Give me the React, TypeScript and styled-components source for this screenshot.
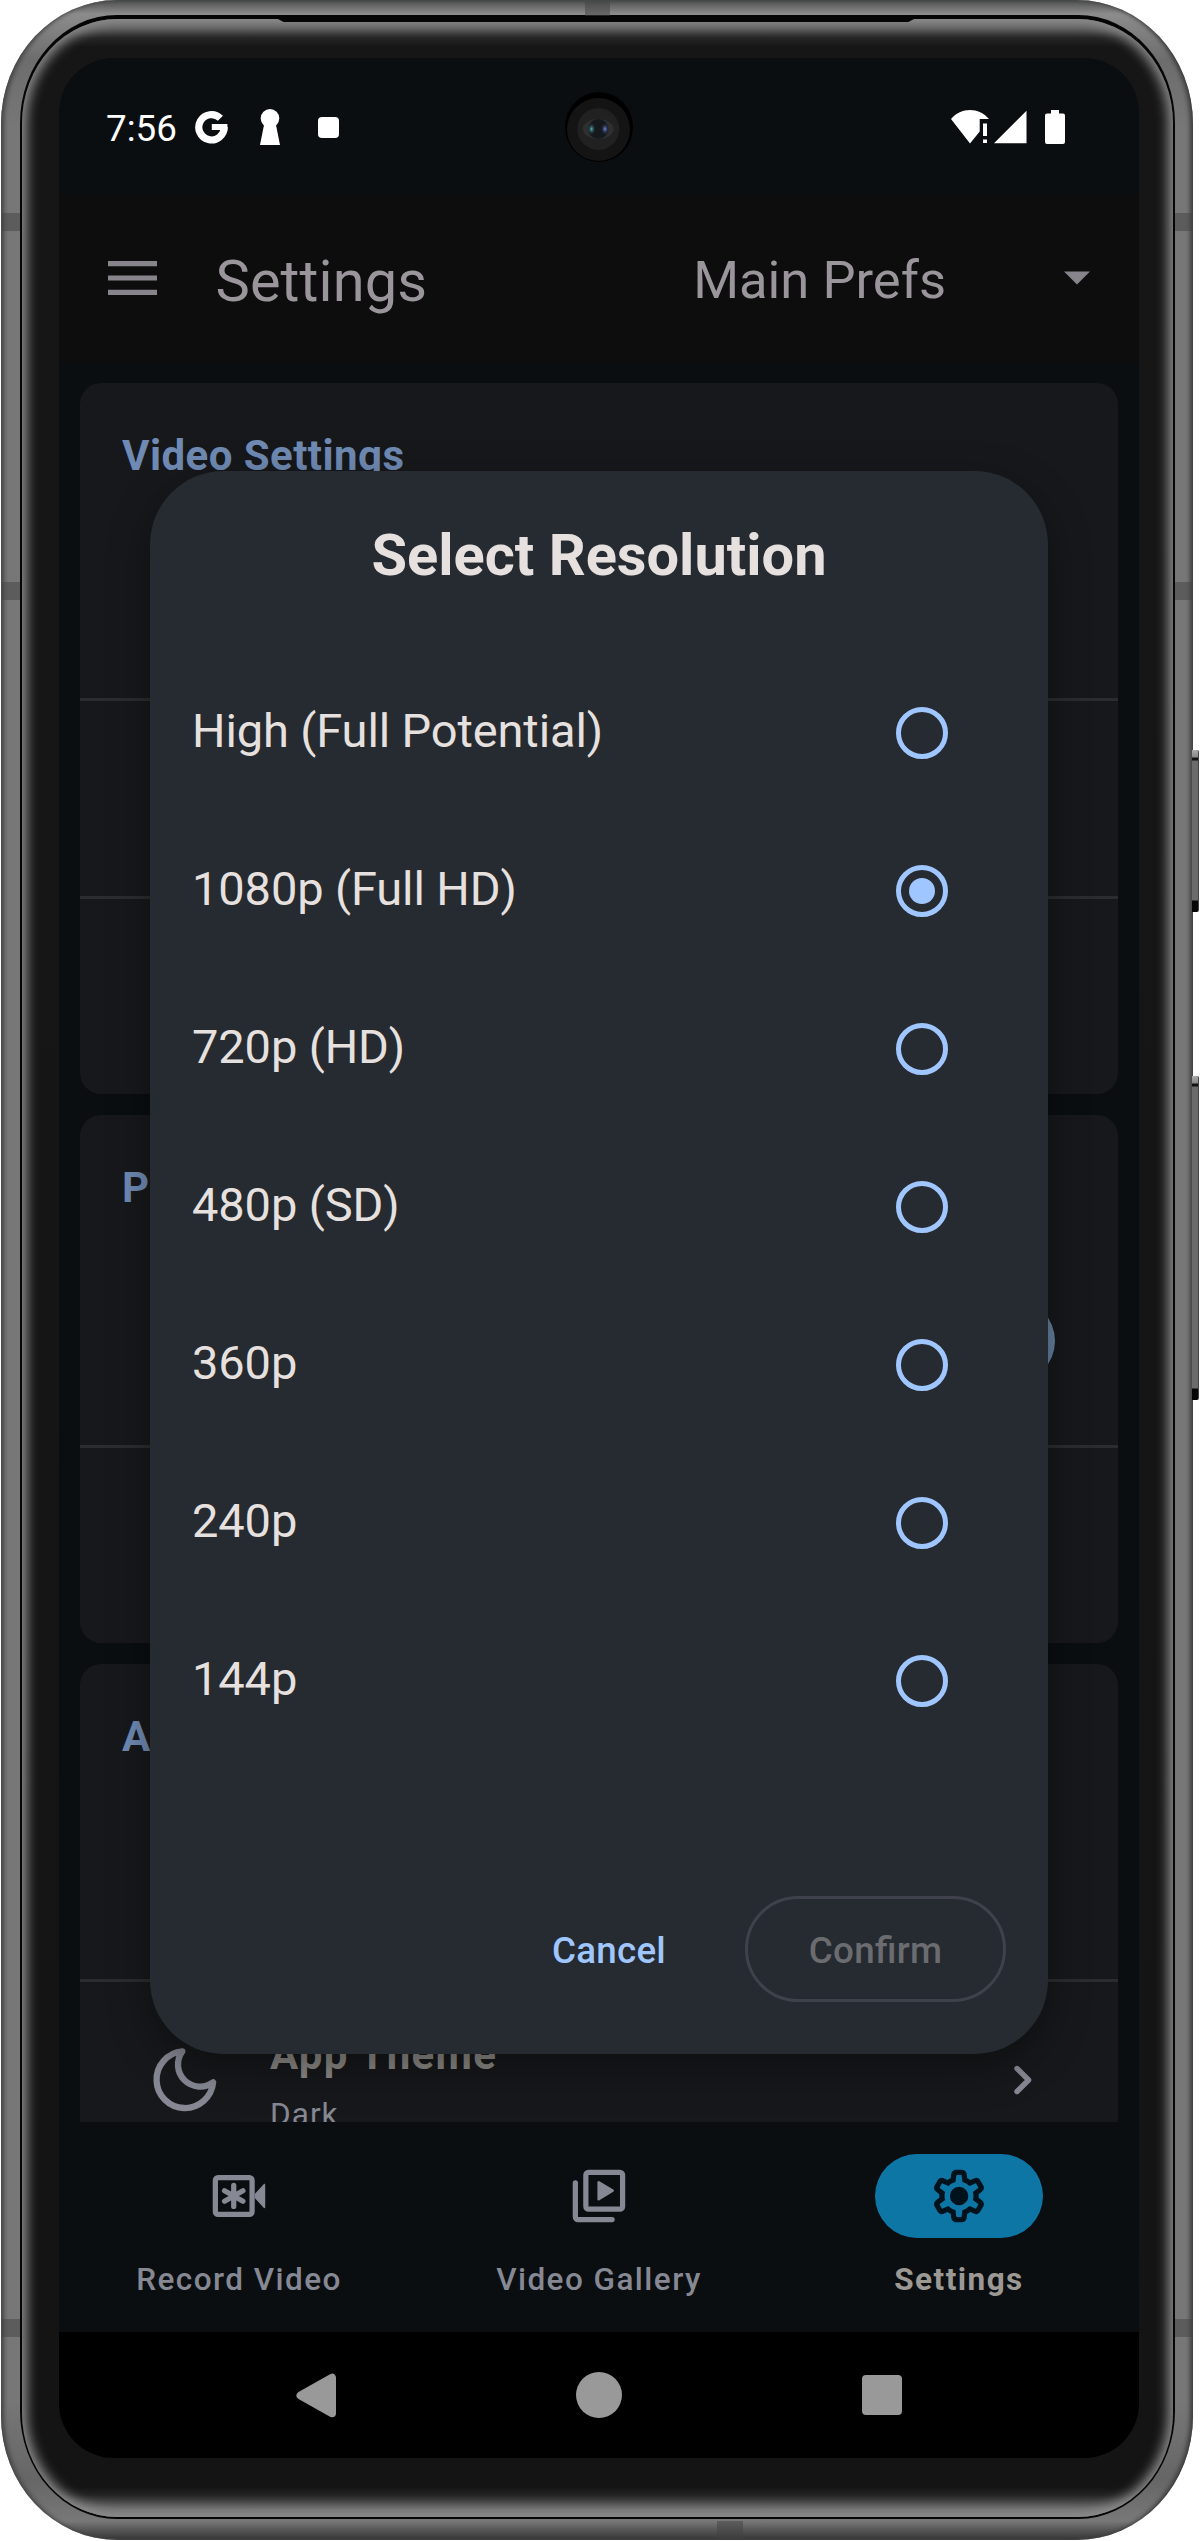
import React from "react";
import styled, { createGlobalStyle } from "styled-components";

const accent = "#a0c6ff";
const muted = "#868893";

const GlobalStyle = createGlobalStyle`
  * { box-sizing: border-box; }
  body { margin: 0; background: #fff; font-family: Roboto, "Noto Sans", sans-serif; }
  svg { display: block; flex: none; }
`;

const Stage = styled.main`
  position: relative;
  width: 1200px;
  height: 2541px;
  padding: 0 0 1px 1px;
  overflow: hidden;
`;

/* ---------- phone body ---------- */

const MetalBand = styled.div`
  width: 1192px;
  height: 2540px;
  padding: 15px 18px 21px 19px;
  border-radius: 116px / 124px;
  background: linear-gradient(
    180deg,
    #4b4f4d 0,
    #646464 5px,
    #8c8c8c 14px,
    #6d6d6d 60px,
    #777 130px,
    #777 2400px,
    #666 2480px,
    #787878 2521px,
    #565656 2530px,
    #3c3c3c 2538px
  );
  box-shadow: inset 4px 0 4px -1px #454545, inset -4px 0 4px -1px #3c3c3c;
`;

const Seam = styled.div`
  height: 100%;
  padding: 4px 2px 2px 2px;
  border-radius: 97px / 108px;
  background: #050505;
`;

const Glass = styled.div`
  height: 100%;
  padding: 39px 34px 60px 37px;
  border-radius: 95px / 104px;
  background: linear-gradient(
    180deg,
    #747474 0,
    #555 10px,
    #252525 19px,
    #161616 28px,
    #141414 2468px,
    #232323 2476px,
    #6a6a6a 2490px,
    #7d7d7d 2499px
  );
  box-shadow: inset 0 0 12px 5px #8c8c8c;
`;

const Speaker = styled.div`
  position: absolute;
  top: 17px;
  left: 274px;
  width: 644px;
  height: 5px;
  background: #060606;
  clip-path: polygon(0 0, 100% 0, 98.5% 100%, 1.5% 100%);
`;

const AntennaGap = styled.div<{ $x: number; $y: number; $w: number; $h: number }>`
  position: absolute;
  left: ${(p) => p.$x}px;
  top: ${(p) => p.$y}px;
  width: ${(p) => p.$w}px;
  height: ${(p) => p.$h}px;
  background: rgba(66, 66, 66, 0.5);
`;

const SideKey = styled.div<{ $top: number; $height: number }>`
  position: absolute;
  left: 1192px;
  top: ${(p) => p.$top}px;
  width: 7px;
  height: ${(p) => p.$height}px;
  border-radius: 0 2px 2px 0;
  border-right: 1px solid #444;
  background: linear-gradient(
    180deg,
    #aaa 0,
    #888 7px,
    #111 8px,
    #111 10px,
    #6b6b6b 11px,
    #6b6b6b calc(100% - 12px),
    #060606 calc(100% - 11px)
  );
`;

/* ---------- screen ---------- */

const Screen = styled.div`
  position: relative;
  display: flex;
  flex-direction: column;
  width: 1080px;
  height: 2400px;
  border-radius: 55px;
  overflow: hidden;
  background: #0a0e11;
`;

const StatusBar = styled.header`
  display: flex;
  align-items: center;
  justify-content: space-between;
  height: 136px;
  padding: 2px 74px 0 47px;
`;

const StatusGroup = styled.div`
  display: flex;
  align-items: center;
`;

const Clock = styled.time`
  width: 89px;
  padding-top: 4px;
  font-size: 36.75px;
  line-height: 44px;
  color: #fff;
`;

const Slot = styled.span<{ $gap: number }>`
  margin-left: ${(p) => p.$gap}px;
`;

const Camera = styled.div`
  position: absolute;
  top: 34px;
  left: 506px;
`;

const AppBar = styled.div`
  display: flex;
  align-items: center;
  height: 168px;
  padding: 0 49px 0 48.5px;
  background: #0d0d0d;
  color: #9a959b;
`;

const AppTitle = styled.h1`
  margin: 0 auto 0 59px;
  padding-top: 6px;
  font-size: 57.75px;
  font-weight: 400;
  line-height: 68px;
  letter-spacing: 0.1px;
`;

const Picker = styled.div`
  display: flex;
  align-items: center;
  gap: 118px;
  font-size: 52.5px;
  line-height: 62px;
`;

const PickerLabel = styled.span`
  padding-top: 4px;
`;

const Content = styled.section`
  display: flex;
  flex-direction: column;
  gap: 21px;
  height: 1760px;
  padding: 21px 21px 0;
  overflow: hidden;
`;

const Card = styled.article`
  flex: none;
  border-radius: 21px;
  background: #17181b;
  overflow: hidden;
`;

const CardTitle = styled.h2`
  height: 145px;
  margin: 0;
  padding: 48px 42px 0;
  font-size: 42px;
  font-weight: 700;
  line-height: 49px;
  letter-spacing: 0.45px;
  color: #6f8ab3;
`;

const Row = styled.div<{ $height: number; $divided?: boolean }>`
  display: flex;
  align-items: center;
  height: ${(p) => p.$height}px;
  padding: 0 63px 0 67px;
  border-top: ${(p) => (p.$divided ? "3px solid #2b2c2f" : "none")};
`;

const SwitchTrack = styled.div`
  width: 136px;
  height: 84px;
  margin: 0 0 24px auto;
  border-radius: 42px;
  background: #64809f;
`;

const RowText = styled.div`
  flex: 1;
  margin-left: 47.4px;
  padding-top: 10.4px;
`;

const RowTitle = styled.div`
  font-size: 42px;
  font-weight: 700;
  line-height: 56px;
  letter-spacing: 1.31px;
  color: #8e8b87;
`;

const RowValue = styled.div`
  margin-top: 4.2px;
  font-size: 31.5px;
  line-height: 56px;
  letter-spacing: 1.05px;
  color: ${muted};
`;

const RowEnd = styled.div`
  padding-right: 23px;
`;

const BottomNav = styled.nav`
  display: grid;
  grid-template-columns: repeat(3, 1fr);
  height: 210px;
  padding-top: 32px;
`;

const Tab = styled.a<{ $active?: boolean }>`
  display: flex;
  flex-direction: column;
  align-items: center;
  gap: 23px;
  font-size: 31.5px;
  font-weight: ${(p) => (p.$active ? 700 : 500)};
  line-height: 38px;
  letter-spacing: 1.45px;
  color: ${(p) => (p.$active ? "#9c9995" : muted)};
`;

const Pill = styled.span<{ $active?: boolean }>`
  display: grid;
  place-items: center;
  width: 168px;
  height: 84px;
  border-radius: 42px;
  background: ${(p) => (p.$active ? "#0d76a5" : "transparent")};
`;

const SystemNav = styled.footer`
  display: flex;
  align-items: center;
  justify-content: space-between;
  height: 126px;
  padding: 0 237px;
  background: #000;
`;

/* ---------- dialog ---------- */

const Dialog = styled.div`
  position: absolute;
  left: 91px;
  top: 413px;
  display: flex;
  flex-direction: column;
  width: 898px;
  height: 1583px;
  padding: 50px 42px 52px;
  border-radius: 73.5px;
  background: #262a31;
  color: #e6e1df;
  box-shadow: 0 14px 42px rgba(0, 0, 0, 0.38);
`;

const DialogTitle = styled.h2`
  margin: 0 0 65px;
  font-size: 57.75px;
  font-weight: 700;
  line-height: 68px;
  text-align: center;
`;

const Options = styled.ul`
  margin: 0;
  padding: 0;
  list-style: none;
`;

const Option = styled.li`
  display: flex;
  align-items: center;
  justify-content: space-between;
  height: 158px;
  padding-right: 58px;
`;

const OptionLabel = styled.span`
  padding-bottom: 4px;
  font-size: 47px;
  line-height: 56px;
  letter-spacing: -0.12px;
`;

const Radio = styled.span`
  display: grid;
  place-items: center;
  width: 52.5px;
  height: 52.5px;
  border: 5.25px solid ${accent};
  border-radius: 50%;
`;

const RadioDot = styled.span`
  width: 26px;
  height: 26px;
  border-radius: 50%;
  background: ${accent};
`;

const Actions = styled.div`
  display: flex;
  align-items: center;
  justify-content: flex-end;
  gap: 79px;
  margin-top: auto;
`;

const ActionButton = styled.button<{ $outlined?: boolean }>`
  width: ${(p) => (p.$outlined ? "261px" : "auto")};
  height: 106px;
  padding: 3px 0 0;
  border: ${(p) => (p.$outlined ? "3px solid #3f424a" : "none")};
  border-radius: 53px;
  background: none;
  font: 500 36.75px / 44px Roboto, sans-serif;
  font-feature-settings: "liga" 1;
  letter-spacing: 0.26px;
  color: ${(p) => (p.$outlined ? "#6b6c70" : accent)};
`;

const SearchBrandIcon = () => (
  <svg width="33" height="34" viewBox="0 0 33 34" fill="none" stroke="#fff" strokeWidth="7.2">
    <path d="M25.4 8.2A12.7 12.7 0 1 0 29.2 17" />
    <path d="M16.8 17h15.6" strokeWidth="6" />
  </svg>
);

const KeyholeIcon = () => (
  <svg width="20" height="36" viewBox="0 0 20 36" fill="#fff">
    <circle cx="10" cy="9.3" r="9.3" />
    <path d="M4.6 13h10.8L20 36H0z" />
  </svg>
);

const StopIcon = () => (
  <svg width="21" height="21">
    <rect width="21" height="21" rx="4" fill="#fff" />
  </svg>
);

const WifiAlertIcon = () => (
  <svg width="38" height="34" viewBox="0 0 38 34" fill="#fff">
    <path d="M0 9C5 3 12 0 19 0s14 3 19 9H28.7v12.5L19 33.5z" />
    <path d="M32 13.5h4V26h-4zM32 29.5h4V33h-4z" />
  </svg>
);

const SignalIcon = () => (
  <svg width="33" height="34" viewBox="0 0 33 34" fill="#fff">
    <path d="M32.5.8v32.4H0z" />
  </svg>
);

const BatteryIcon = () => (
  <svg width="20" height="34" viewBox="0 0 20 34" fill="#fff">
    <path d="M6 0h8v3.4h4a2 2 0 0 1 2 2V32a2 2 0 0 1-2 2H2a2 2 0 0 1-2-2V5.4a2 2 0 0 1 2-2h4z" />
  </svg>
);

const Lens = () => (
  <svg width="69" height="71" viewBox="0 0 69 71">
    <defs>
      <radialGradient id="teal">
        <stop offset="0" stopColor="#58b3ae" />
        <stop offset="1" stopColor="#1c3338" stopOpacity="0" />
      </radialGradient>
      <radialGradient id="blue">
        <stop offset="0" stopColor="#6b8ae0" />
        <stop offset="1" stopColor="#1c2638" stopOpacity="0" />
      </radialGradient>
    </defs>
    <ellipse cx="34" cy="35" rx="34" ry="35" fill="#000" />
    <circle cx="33.5" cy="37.5" r="31.5" fill="#141414" />
    <circle cx="33.3" cy="37" r="21" fill="#212121" />
    <ellipse cx="33.3" cy="37" rx="15.5" ry="10" fill="#2f2f2f" />
    <circle cx="33.3" cy="37" r="10" fill="#15191e" />
    <ellipse cx="26.5" cy="37" rx="4" ry="6" fill="url(#teal)" />
    <ellipse cx="40" cy="37" rx="4" ry="6" fill="url(#blue)" />
  </svg>
);

const MenuIcon = () => (
  <svg width="49" height="34" viewBox="0 0 49 34" fill="#87848c">
    <path d="M0 0h49v5.2H0zM0 14.4h49v5.2H0zM0 28.8h49V34H0z" />
  </svg>
);

const CaretIcon = () => (
  <svg width="26" height="14" viewBox="0 0 26 14" fill="#87848c">
    <path d="M0 .5h26L13 13.5z" />
  </svg>
);

const MoonIcon = () => (
  <svg width="75.6" height="75.6" viewBox="0 0 24 24" fill="none" stroke={muted} strokeWidth="2" strokeLinecap="round" strokeLinejoin="round">
    <path d="M21 12.79A9 9 0 1 1 11.21 3 7 7 0 0 0 21 12.79z" />
  </svg>
);

const ChevronIcon = () => (
  <svg width="18" height="30" viewBox="0 0 18 30" fill="none" stroke={muted} strokeWidth="5.4" strokeLinecap="round" strokeLinejoin="round">
    <path d="M3 3.5 14.6 15 3 26.5" />
  </svg>
);

const RecordIcon = () => (
  <svg width="63" height="63" viewBox="0.2 0.2 24 24" fill="none" stroke={muted} strokeWidth="2" strokeLinecap="round">
    <rect x="3" y="5" width="14" height="14" rx="1" />
    <path d="M10 8v8M6.5 10l7 4M13.5 10l-7 4" />
    <path d="M18 11.2l3.4-3.7c.2-.3.6-.2.6.2v8.6c0 .4-.4.5-.6.2L18 12.8z" fill={muted} stroke="none" />
  </svg>
);

const GalleryIcon = () => (
  <svg width="63" height="63" viewBox="0.2 0.2 24 24" fill="none" stroke={muted} strokeWidth="2" strokeLinecap="round" strokeLinejoin="round">
    <rect x="7" y="3" width="14" height="14" rx="1" />
    <path d="M3 7v13a1 1 0 0 0 1 1h13" />
    <path d="M11.9 6.8v6.4L17.2 10z" fill={muted} strokeWidth="1" />
  </svg>
);

const GearIcon = () => (
  <svg width="63" height="63" viewBox="8 -952 960 960" fill="#00131c">
    <path d="M433-80q-27 0-46.5-18T363-142l-9-66q-13-5-24.5-12T307-235l-62 26q-25 11-50 2t-39-32l-47-82q-14-23-8-49t27-43l53-40q-1-7-1-13.5v-27q0-6.5 1-13.5l-53-40q-21-17-27-43t8-49l47-82q14-23 39-32t50 2l62 26q11-8 23-15t24-12l9-66q4-26 23.5-44t46.5-18h94q27 0 46.5 18t23.5 44l9 66q13 5 24.5 12t22.5 15l62-26q25-11 50-2t39 32l47 82q14 23 8 49t-27 43l-53 40q1 7 1 13.5v27q0 6.5-2 13.5l53 40q21 17 27 43t-8 49l-48 82q-14 23-39 32t-50-2l-60-26q-11 8-23 15t-24 12l-9 66q-4 26-23.5 44T527-80h-94Zm7-80h79l14-106q31-8 57.5-23.5T639-327l99 41 39-68-86-65q5-14 7-29.5t2-31.5q0-16-2-31.5t-7-29.5l86-65-39-68-99 42q-22-23-48.5-38.5T533-694l-13-106h-79l-14 106q-31 8-57.5 23.5T321-633l-99-41-39 68 86 64q-5 15-7 30t-2 32q0 16 2 31t7 30l-86 65 39 68 99-42q22 23 48.5 38.5T427-266l13 106Zm42-180q58 0 99-41t41-99q0-58-41-99t-99-41q-59 0-99.5 41T342-480q0 58 40.5 99t99.5 41Z" />
  </svg>
);

const BackIcon = () => (
  <svg width="40" height="45" viewBox="0 0 40 45" fill="#999" stroke="#999" strokeWidth="8" strokeLinejoin="round">
    <path d="M36 4.8v35.4L4.5 22.5z" />
  </svg>
);

const HomeIcon = () => (
  <svg width="46" height="46">
    <circle cx="23" cy="23" r="23" fill="#999" />
  </svg>
);

const RecentsIcon = () => (
  <svg width="40" height="40">
    <rect width="40" height="40" rx="4" fill="#999" />
  </svg>
);

const resolutions = [
  "High (Full Potential)",
  "1080p (Full HD)",
  "720p (HD)",
  "480p (SD)",
  "360p",
  "240p",
  "144p",
];
const selected = "1080p (Full HD)";

const sideGaps = [213, 582, 2319];

export default function App() {
  return (
    <Stage>
      <GlobalStyle />
      <MetalBand>
        <Seam>
          <Glass>
            <Screen>
              <StatusBar>
                <StatusGroup>
                  <Clock>7:56</Clock>
                  <Slot $gap={0}><SearchBrandIcon /></Slot>
                  <Slot $gap={32}><KeyholeIcon /></Slot>
                  <Slot $gap={38}><StopIcon /></Slot>
                </StatusGroup>
                <StatusGroup>
                  <Slot $gap={0}><WifiAlertIcon /></Slot>
                  <Slot $gap={4.5}><SignalIcon /></Slot>
                  <Slot $gap={18.5}><BatteryIcon /></Slot>
                </StatusGroup>
              </StatusBar>
              <Camera><Lens /></Camera>

              <AppBar>
                <MenuIcon />
                <AppTitle>Settings</AppTitle>
                <Picker>
                  <PickerLabel>Main Prefs</PickerLabel>
                  <CaretIcon />
                </Picker>
              </AppBar>

              <Content>
                <Card>
                  <CardTitle>Video Settings</CardTitle>
                  <Row $height={170} />
                  <Row $height={198} $divided />
                  <Row $height={198} $divided />
                </Card>
                <Card>
                  <CardTitle>P</CardTitle>
                  <Row $height={185}><SwitchTrack /></Row>
                  <Row $height={198} $divided />
                </Card>
                <Card>
                  <CardTitle>A</CardTitle>
                  <Row $height={170} />
                  <Row $height={198} $divided>
                    <MoonIcon />
                    <RowText>
                      <RowTitle>App Theme</RowTitle>
                      <RowValue>Dark</RowValue>
                    </RowText>
                    <RowEnd><ChevronIcon /></RowEnd>
                  </Row>
                </Card>
              </Content>

              <BottomNav>
                <Tab><Pill><RecordIcon /></Pill>Record Video</Tab>
                <Tab><Pill><GalleryIcon /></Pill>Video Gallery</Tab>
                <Tab $active><Pill $active><GearIcon /></Pill>Settings</Tab>
              </BottomNav>

              <SystemNav>
                <BackIcon />
                <HomeIcon />
                <RecentsIcon />
              </SystemNav>

              <Dialog role="dialog">
                <DialogTitle>Select Resolution</DialogTitle>
                <Options>
                  {resolutions.map((name) => (
                    <Option key={name}>
                      <OptionLabel>{name}</OptionLabel>
                      <Radio>{name === selected && <RadioDot />}</Radio>
                    </Option>
                  ))}
                </Options>
                <Actions>
                  <ActionButton>Cancel</ActionButton>
                  <ActionButton $outlined>Confirm</ActionButton>
                </Actions>
              </Dialog>
            </Screen>
          </Glass>
        </Seam>
      </MetalBand>

      <Speaker />
      {sideGaps.map((y) => (
        <React.Fragment key={y}>
          <AntennaGap $x={2} $y={y} $w={18} $h={18} />
          <AntennaGap $x={1175} $y={y} $w={17} $h={18} />
        </React.Fragment>
      ))}
      <AntennaGap $x={585} $y={1} $w={25} $h={15} />
      <AntennaGap $x={717} $y={2521} $w={26} $h={18} />
      <SideKey $top={750} $height={162} />
      <SideKey $top={1076} $height={324} />
    </Stage>
  );
}
